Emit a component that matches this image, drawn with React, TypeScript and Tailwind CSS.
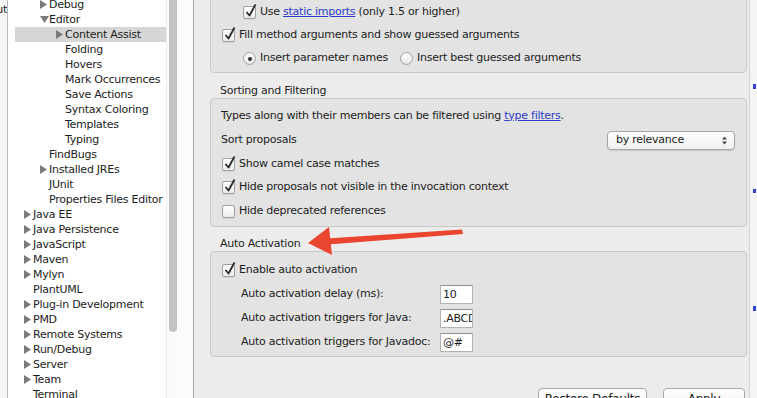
import React from 'react';

type Node = { label: string; level: number; arrow?: 'right' | 'down'; selected?: boolean };

const tree: Node[] = [
  { label: 'Debug', level: 1, arrow: 'right' },
  { label: 'Editor', level: 1, arrow: 'down' },
  { label: 'Content Assist', level: 2, arrow: 'right', selected: true },
  { label: 'Folding', level: 2 },
  { label: 'Hovers', level: 2 },
  { label: 'Mark Occurrences', level: 2 },
  { label: 'Save Actions', level: 2 },
  { label: 'Syntax Coloring', level: 2 },
  { label: 'Templates', level: 2 },
  { label: 'Typing', level: 2 },
  { label: 'FindBugs', level: 1 },
  { label: 'Installed JREs', level: 1, arrow: 'right' },
  { label: 'JUnit', level: 1 },
  { label: 'Properties Files Editor', level: 1 },
  { label: 'Java EE', level: 0, arrow: 'right' },
  { label: 'Java Persistence', level: 0, arrow: 'right' },
  { label: 'JavaScript', level: 0, arrow: 'right' },
  { label: 'Maven', level: 0, arrow: 'right' },
  { label: 'Mylyn', level: 0, arrow: 'right' },
  { label: 'PlantUML', level: 0 },
  { label: 'Plug-in Development', level: 0, arrow: 'right' },
  { label: 'PMD', level: 0, arrow: 'right' },
  { label: 'Remote Systems', level: 0, arrow: 'right' },
  { label: 'Run/Debug', level: 0, arrow: 'right' },
  { label: 'Server', level: 0, arrow: 'right' },
  { label: 'Team', level: 0, arrow: 'right' },
  { label: 'Terminal', level: 0 },
];

const indent = ['pl-[9px]', 'pl-[25px]', 'pl-[41px]'];

const Twisty = ({ dir }: { dir?: 'right' | 'down' }) => (
  <span className="flex h-[15px] w-[9px] shrink-0 items-center">
    {dir === 'right' && (
      <svg width="8" height="9" viewBox="0 0 8 9">
        <path d="M0 0 L7 4.5 L0 9 Z" fill="#7b7b7b" />
      </svg>
    )}
    {dir === 'down' && (
      <svg width="9" height="8" viewBox="0 0 9 8">
        <path d="M0 0 L9 0 L4.5 7 Z" fill="#7b7b7b" />
      </svg>
    )}
  </span>
);

const Check = ({ on }: { on?: boolean }) => (
  <span className="relative inline-block h-[13px] w-[13px] shrink-0 rounded-[2px] border border-[#a0a0a0] bg-gradient-to-b from-white to-[#ebebeb] shadow-[0_1px_0_rgba(0,0,0,0.06)]">
    {on && (
      <svg className="absolute left-[1px] top-[-4px]" width="12" height="15" viewBox="0 0 12 15">
        <path d="M1.5 9 L4.5 12.5 L10.5 1.5" fill="none" stroke="#2a2a2a" strokeWidth="1.8" strokeLinejoin="round" />
      </svg>
    )}
  </span>
);

const Radio = ({ on }: { on?: boolean }) => (
  <span className="flex h-[13px] w-[13px] shrink-0 items-center justify-center rounded-full border border-[#a0a0a0] bg-gradient-to-b from-white to-[#e6e6e6]">
    {on && <span className="h-[4px] w-[4px] rounded-full bg-[#333]" />}
  </span>
);

const Link = ({ children }: { children: React.ReactNode }) => (
  <span className="text-[#2b3ccc] underline decoration-[#2b3ccc]">{children}</span>
);

const Field = ({ value }: { value: string }) => (
  <div className="h-[19px] w-[33px] overflow-hidden whitespace-nowrap border border-[#b4b4b4] border-t-[#8e8e8e] bg-white pl-[2px] leading-[17px]">
    {value}
  </div>
);

const App = () => {
  return (
    <div
      className="relative flex h-[398px] w-[757px] overflow-hidden bg-[#ececec] text-[11px] tracking-[-0.25px] text-[#1c1c1c]"
      style={{ fontFamily: '"DejaVu Sans", "Noto Sans", sans-serif' }}
    >
      {/* window behind */}
      <div className="flex h-full w-[8px] shrink-0 justify-end overflow-hidden border-r border-[#b8b8b8] bg-[#f7f7f7]">
        <span className="mt-[3px] whitespace-nowrap leading-[13px]">ut</span>
      </div>

      {/* preference tree */}
      <div className="h-full w-[158px] shrink-0 overflow-hidden bg-white">
        <div className="mt-[-3px]">
          {tree.map((n) => (
            <div
              key={n.label}
              className={`ml-[7px] flex h-[15px] items-center whitespace-nowrap ${indent[n.level]} ${n.selected ? 'bg-[#d6d6d6]' : ''}`}
            >
              <Twisty dir={n.arrow} />
              <span className="leading-[15px]">{n.label}</span>
            </div>
          ))}
        </div>
      </div>

      {/* scrollbar */}
      <div className="h-full w-[14px] shrink-0 border-l border-[#ececec] bg-[#fafafa]">
        <div className="ml-[2px] h-[332px] w-[8px] rounded-b-full bg-[#c2c2c2]" />
      </div>
      <div className="h-full w-[14px] shrink-0 border-r border-[#a8a8a8] bg-[#fbfbfb]" />

      {/* preference page */}
      <div className="flex h-full w-[555px] shrink-0 flex-col pl-[16px]">
        <div className="mt-[-5px] w-[537px] rounded-[4px] border border-[#c9c9c9] bg-[#e3e3e3] pb-[2px] pt-[5px]">
          <div className="flex h-[23px] items-center gap-[4px] pl-[32px]">
            <Check on />
            <span>
              Use <Link>static imports</Link> (only 1.5 or higher)
            </span>
          </div>
          <div className="flex h-[23px] items-center gap-[4px] pl-[11px]">
            <Check on />
            <span>Fill method arguments and show guessed arguments</span>
          </div>
          <div className="flex h-[23px] items-center pl-[32px]">
            <Radio on />
            <span className="ml-[4px] w-[140px]">Insert parameter names</span>
            <Radio />
            <span className="ml-[4px]">Insert best guessed arguments</span>
          </div>
        </div>

        <div className="pl-[10px] pt-[10px] leading-[15px]">Sorting and Filtering</div>
        <div className="w-[537px] rounded-[4px] border border-[#c9c9c9] bg-[#e3e3e3] pb-[3px] pt-[5px]">
          <div className="flex h-[24px] items-center pl-[10px]">
            Types along with their members can be filtered using&nbsp;<Link>type filters</Link>.
          </div>
          <div className="flex h-[24px] items-center justify-between pl-[10px] pr-[11px]">
            <span>Sort proposals</span>
            <div className="flex h-[19px] w-[128px] items-center justify-between rounded-[4px] border border-[#a5a5a5] bg-gradient-to-b from-white to-[#f0f0f0] pl-[8px] pr-[7px] shadow-[0_1px_1px_rgba(0,0,0,0.12)]">
              <span>by relevance</span>
              <svg width="5" height="9" viewBox="0 0 5 9">
                <path d="M0 3.5 L2.5 0.5 L5 3.5 Z M0 5.5 L2.5 8.5 L5 5.5 Z" fill="#444" />
              </svg>
            </div>
          </div>
          <div className="flex h-[24px] items-center gap-[4px] pl-[11px]">
            <Check on />
            <span>Show camel case matches</span>
          </div>
          <div className="flex h-[23px] items-center gap-[4px] pl-[11px]">
            <Check on />
            <span>Hide proposals not visible in the invocation context</span>
          </div>
          <div className="flex h-[24px] items-center gap-[4px] pl-[11px]">
            <Check />
            <span>Hide deprecated references</span>
          </div>
        </div>

        <div className="pl-[10px] pt-[9px] leading-[15px]">Auto Activation</div>
        <div className="w-[537px] rounded-[4px] border border-[#c9c9c9] bg-[#e3e3e3] pb-[2px] pt-[6px]">
          <div className="flex h-[24px] items-center gap-[4px] pl-[11px]">
            <Check on />
            <span>Enable auto activation</span>
          </div>
          <div className="flex h-[24px] items-center pl-[30px]">
            <span className="w-[199px]">Auto activation delay (ms):</span>
            <Field value="10" />
          </div>
          <div className="flex h-[24px] items-center pl-[30px]">
            <span className="w-[199px]">Auto activation triggers for Java:</span>
            <Field value=".ABCDEFGHIJ" />
          </div>
          <div className="flex h-[24px] items-center pl-[30px]">
            <span className="w-[199px]">Auto activation triggers for Javadoc:</span>
            <Field value="@#" />
          </div>
        </div>

        <div className="mt-[31px] flex justify-end gap-[16px] pr-[4px]">
          <div className="flex h-[22px] w-[109px] items-center justify-center rounded-[4px] border border-[#a8a8a8] bg-gradient-to-b from-white to-[#f1f1f1] text-[12px]">
            Restore Defaults
          </div>
          <div className="flex h-[22px] w-[82px] items-center justify-center rounded-[4px] border border-[#a8a8a8] bg-gradient-to-b from-white to-[#f1f1f1] text-[12px]">
            Apply
          </div>
        </div>
      </div>

      {/* neighbouring view edge */}
      <div className="relative h-full flex-1 border-l border-[#d4d4d4] bg-[#f4f4f4]">
        <div className="absolute left-[3px] top-[84px] h-[5px] w-[3px] bg-[#3344cc]" />
        <div className="absolute left-[3px] top-[189px] h-[4px] w-[3px] bg-[#3344cc]" />
        <div className="absolute left-[3px] top-[306px] h-[5px] w-[3px] bg-[#3344cc]" />
      </div>

      {/* annotation arrow */}
      <svg className="absolute left-[300px] top-[222px]" width="170" height="40" viewBox="0 0 170 40">
        <path d="M27 16.5 L162 7.5 L163 12 L28 22.5 Z" fill="#e9452f" />
        <path d="M8 21 L29 5 L32 33 Z" fill="#e9452f" />
      </svg>
    </div>
  );
};

export default App;
